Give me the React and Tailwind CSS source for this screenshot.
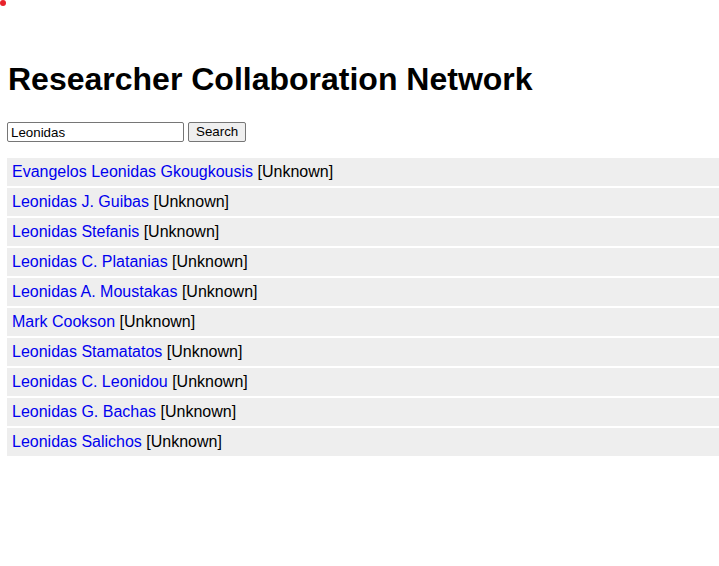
import React, { useState } from 'react';

const researchers = [
  'Evangelos Leonidas Gkougkousis',
  'Leonidas J. Guibas',
  'Leonidas Stefanis',
  'Leonidas C. Platanias',
  'Leonidas A. Moustakas',
  'Mark Cookson',
  'Leonidas Stamatatos',
  'Leonidas C. Leonidou',
  'Leonidas G. Bachas',
  'Leonidas Salichos',
];

const App = () => {
  const [query, setQuery] = useState('Leonidas');

  return (
    <div className="relative min-h-[566px] bg-white font-['Liberation_Sans',Arial,sans-serif] text-black">
      <svg className="absolute left-0 top-0" width="8" height="8" viewBox="0 0 8 8">
        <circle cx="3" cy="3" r="3" fill="#e8222a" />
      </svg>

      <div className="pl-[8px] pt-[61px]">
        <h1 className="text-[32px] font-bold leading-[37px]">Researcher Collaboration Network</h1>

        <div className="mt-[24px] flex items-center gap-[4px] pl-[-1px]">
          <input
            value={query}
            onChange={(e) => setQuery(e.target.value)}
            className="ml-[-1px] h-[20px] w-[177px] rounded-[2px] border border-[#767676] px-[3px] text-[13.33px] leading-none outline-none"
          />
          <button className="h-[20px] rounded-[2px] border border-[#767676] bg-[#efefef] px-[7px] text-[13.33px] leading-none">
            Search
          </button>
        </div>
      </div>

      <ul className="mt-[16px] flex flex-col gap-[2px] pl-[7px]">
        {researchers.map((name) => (
          <li key={name} className="flex h-[28px] items-center bg-[#eeeeee] pl-[5px] text-[16px] leading-none">
            <a href="#" className="text-[#0000ee]">{name}</a>
            <span>&nbsp;[Unknown]</span>
          </li>
        ))}
      </ul>
    </div>
  );
};

export default App;
